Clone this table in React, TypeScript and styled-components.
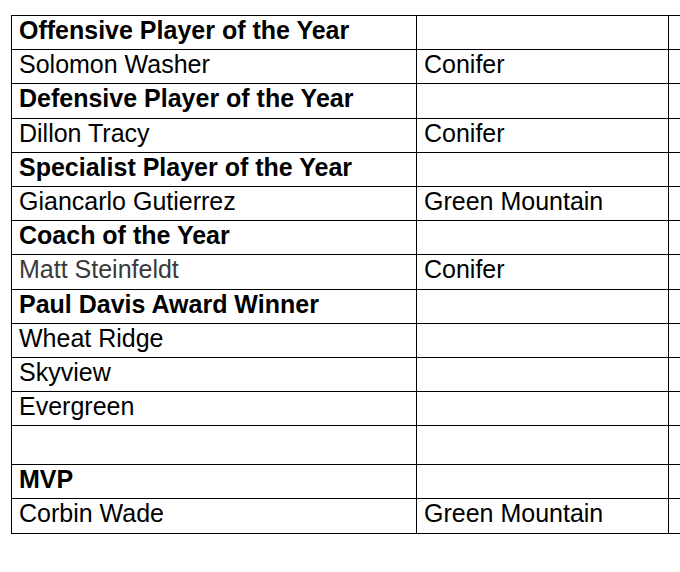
import React from "react";
import styled, {createGlobalStyle} from "styled-components";

type RowType = {
  name: string,
  school?: string,
  heading?: boolean,
  muted?: boolean,
  tall?: boolean,
}

const rows: RowType[] = [
  {name: "Offensive Player of the Year", heading: true},
  {name: "Solomon Washer", school: "Conifer"},
  {name: "Defensive Player of the Year", heading: true},
  {name: "Dillon Tracy", school: "Conifer"},
  {name: "Specialist Player of the Year", heading: true},
  {name: "Giancarlo Gutierrez", school: "Green Mountain"},
  {name: "Coach of the Year", heading: true},
  {name: "Matt Steinfeldt", school: "Conifer", muted: true},
  {name: "Paul Davis Award Winner", heading: true},
  {name: "Wheat Ridge"},
  {name: "Skyview"},
  {name: "Evergreen"},
  {name: "", tall: true},
  {name: "MVP", heading: true},
  {name: "Corbin Wade", school: "Green Mountain"},
]

export default function App() {
  return (
    <>
      <GlobalStyle/>
      <Page>
        <AwardsTable>
          <tbody>
          {rows.map((row, i) => (
            <Row key={i} $tall={row.tall}>
              <NameCell $heading={row.heading} $muted={row.muted}>{row.name}</NameCell>
              <SchoolCell>{row.school}</SchoolCell>
              <ExtraCell/>
            </Row>
          ))}
          </tbody>
        </AwardsTable>
      </Page>
    </>
  )
}

const GlobalStyle = createGlobalStyle`
    body {
        margin: 0;
        background: #fff;
        font-family: "Liberation Sans", Arial, sans-serif;
        overflow: hidden;
    }
`

const Page = styled.div`
    padding: 15px 0 0 11px;
    width: 720px;
`

const AwardsTable = styled.table`
    border-collapse: collapse;
    table-layout: fixed;
    width: 720px;
    font-size: 25px;
    color: #000;
`

const Row = styled.tr<{ $tall?: boolean }>`
    height: ${props => props.$tall ? '39px' : '34.2px'};
`

const Cell = styled.td`
    border: 1px solid #000;
    padding: 0 7px;
    line-height: 28px;
    white-space: nowrap;
    vertical-align: top;
`

const NameCell = styled(Cell)<{ $heading?: boolean, $muted?: boolean }>`
    width: 390px;
    font-weight: ${props => props.$heading ? 700 : 400};
    color: ${props => props.$muted ? '#3a3a3a' : '#000'};
`

const SchoolCell = styled(Cell)`
    width: 237px;
`

const ExtraCell = styled(Cell)`
`
